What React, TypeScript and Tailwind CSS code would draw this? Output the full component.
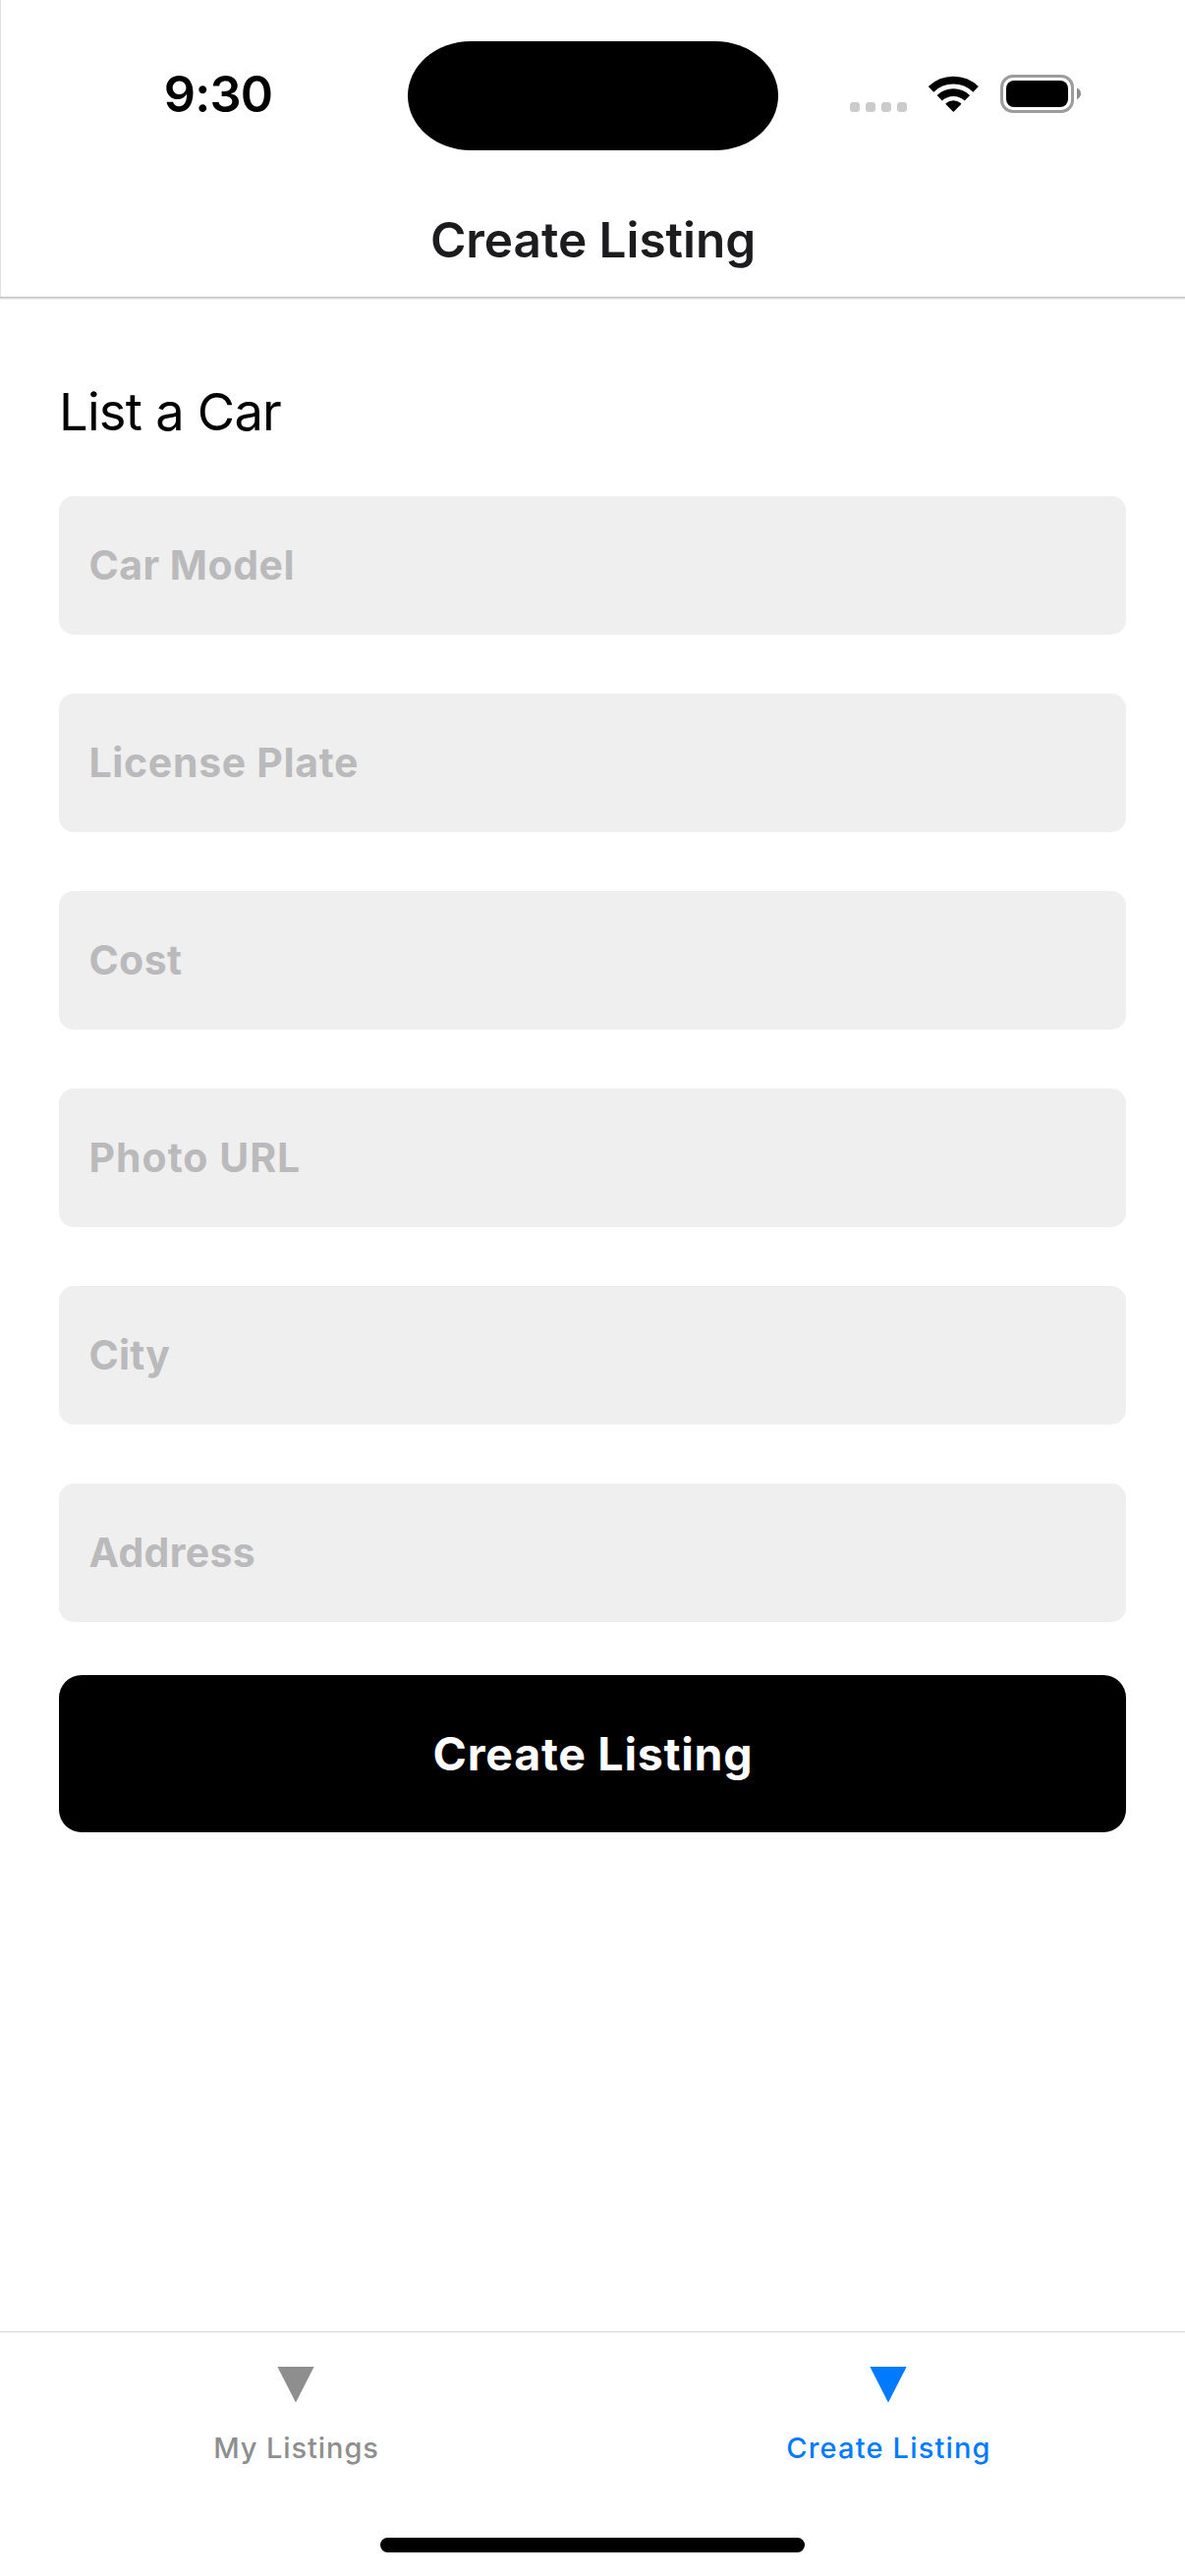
const fields = [
  { label: 'Car Model', tracking: 'tracking-[0.48px]' },
  { label: 'License Plate', tracking: 'tracking-[0.68px]' },
  { label: 'Cost', tracking: 'tracking-[0.4px]' },
  { label: 'Photo URL', tracking: 'tracking-[1.01px]' },
  { label: 'City', tracking: 'tracking-[0.2px]' },
  { label: 'Address', tracking: 'tracking-[0.32px]' },
];

function SignalDots() {
  return (
    <svg width="58" height="39" viewBox="0 0 58 39" fill="#cbcbcb">
      {[0, 16, 32, 48].map((x) => (
        <rect key={x} x={x} y="28" width="10" height="10" rx="3.2" />
      ))}
    </svg>
  );
}

function WifiIcon() {
  return (
    <svg className="ml-[22px]" width="51" height="39" viewBox="0 0 51 39" fill="none" stroke="#000">
      <path d="M2.5 14.8A32.8 32.8 0 0 1 48.1 14.8" strokeWidth="7.9" />
      <path d="M11.2 23.8A20.3 20.3 0 0 1 39.4 23.8" strokeWidth="7.6" />
      <path d="M25.3 38L17.6 30.2Q17.2 29.6 17.8 29.1Q21.1 26.2 25.3 26.2T32.8 29.1Q33.4 29.6 33 30.2Z" fill="#000" stroke="none" />
    </svg>
  );
}

function BatteryIcon() {
  return (
    <svg className="ml-[22px]" width="83" height="39" viewBox="0 0 83 39">
      <rect x="1.5" y="1.5" width="72" height="36" rx="11.5" fill="none" stroke="#9c9c9c" strokeWidth="3" />
      <rect x="6" y="6" width="63" height="27" rx="8" fill="#000" />
      <path d="M78 13.5C80.8 14.7 82 17 82 19.3S80.8 24 78 25.2Z" fill="#8c8c8c" />
    </svg>
  );
}

function Tab({ label, color, tracking }: { label: string; color: string; tracking: string }) {
  return (
    <div className={`flex flex-1 flex-col items-center ${color}`}>
      <svg className="mt-[35px] mr-[1.4px]" width="38" height="37" viewBox="0 0 38 37" fill="currentColor">
        <path d="M0.4 0H37.6L19 36.5Z" />
      </svg>
      <span className={`mt-[27px] text-[29px] leading-[37px] font-[460] whitespace-nowrap ${tracking}`}>{label}</span>
    </div>
  );
}

export default function App() {
  return (
    <div className="flex h-[2622px] w-[1206px] flex-col overflow-hidden bg-white font-['Inter',sans-serif] text-black">
      <header className="flex h-[302px] shrink-0 flex-col border-l border-[#e2e2e2]">
        <div className="flex h-[194px] items-center pl-[165.8px]">
          <span className="w-[248px] pb-[2px] text-[50.5px] leading-[60px] font-semibold tracking-[-0.9px]">9:30</span>
          <div className="h-[111px] w-[377px] rounded-[64px/55.5px] bg-black" />
          <div className="ml-[73.2px] flex pb-[3px]">
            <SignalDots />
            <WifiIcon />
            <BatteryIcon />
          </div>
        </div>
        <h1 className="text-center text-[49.5px] leading-[100px] font-semibold tracking-[-0.04px] text-[#1c1c1e]">Create Listing</h1>
      </header>
      <div className="h-px shrink-0 bg-[#c6c6c6]" />
      <div className="h-px shrink-0 bg-[#d8d8d8]" />
      <div className="h-px shrink-0 bg-[#f0f0f0]" />

      <main className="flex flex-1 flex-col px-[60px] pt-[84px]">
        <h2 className="text-[52.5px] leading-[60px] font-normal tracking-[-0.78px]">List a Car</h2>
        <div className="mt-[56px] flex flex-col gap-[60px]">
          {fields.map(({ label, tracking }) => (
            <div
              key={label}
              className={`h-[141px] rounded-[15px] bg-[#efefef] pl-[30.4px] text-[41px] leading-[141px] font-bold text-[#bababc] ${tracking}`}
            >
              {label}
            </div>
          ))}
        </div>
        <button className="mt-[54px] h-[160px] rounded-[23px] bg-black pt-[2px] pl-[1px] text-[46.5px] font-bold tracking-[0.73px] text-white">
          Create Listing
        </button>
      </main>

      <nav className="flex h-[249px] shrink-0 flex-col border-t border-[#d8d8d8]">
        <div className="flex h-[209px]">
          <Tab label="My Listings" color="text-[#8e8e8f]" tracking="tracking-[0.92px]" />
          <Tab label="Create Listing" color="text-[#007aff]" tracking="tracking-[1.18px]" />
        </div>
        <div className="h-[15px] w-[432px] shrink-0 self-center rounded-full bg-black" />
      </nav>
    </div>
  );
}
